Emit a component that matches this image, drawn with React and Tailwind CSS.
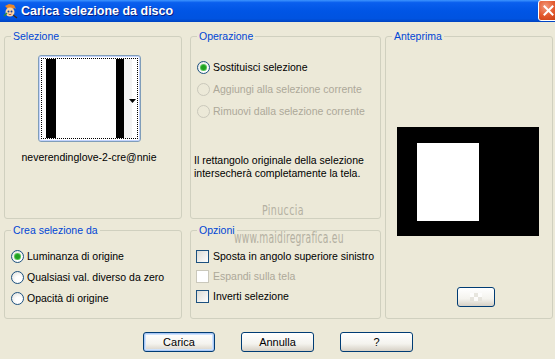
import React from "react";

const font = { fontFamily: '"Liberation Sans", Arial, sans-serif' };

function Group({ title, className = "", children }) {
  return (
    <div className={"relative border border-[#D0D0BF] rounded-[3px] " + className}>
      <span className="absolute left-[6px] -top-[7px] px-[2px] bg-[#ECE9D8] text-[#0046D5] leading-[13px]">
        {title}
      </span>
      {children}
    </div>
  );
}

function Radio({ checked, disabled, label }) {
  return (
    <div className="flex items-center h-[13px]">
      <span
        className={
          "w-[13px] h-[13px] rounded-full border flex items-center justify-center shrink-0 " +
          (disabled
            ? "border-[#CAC8BB] bg-[#ECE9D8]"
            : "border-[#1C5180] bg-[radial-gradient(circle_at_60%_65%,#ffffff_30%,#DCDCD6_100%)]")
        }
      >
        {checked && <span className="w-[5px] h-[5px] rounded-full bg-[#21A121] shadow-[0_0_0_1px_#56C456]" />}
      </span>
      <span className={"ml-[3px] whitespace-nowrap " + (disabled ? "text-[#ACA899]" : "text-black")}>{label}</span>
    </div>
  );
}

function Check({ disabled, label }) {
  return (
    <div className="flex items-center h-[13px]">
      <span
        className={
          "w-[13px] h-[13px] border shrink-0 " +
          (disabled
            ? "border-[#CAC8BB] bg-white"
            : "border-[#1C5180] bg-[linear-gradient(135deg,#DCDCD6_0%,#ffffff_100%)]")
        }
      />
      <span className={"ml-[4px] whitespace-nowrap " + (disabled ? "text-[#ACA899]" : "text-black")}>{label}</span>
    </div>
  );
}

function Button({ children, def, className = "" }) {
  return (
    <div
      className={
        "h-[20px] rounded-[3px] border border-[#003C74] bg-[linear-gradient(180deg,#FFFFFF_0%,#F4F3EE_60%,#D6D0C5_100%)] flex items-center justify-center text-black text-[11px] " +
        (def ? "shadow-[inset_0_0_0_1px_#A9C7F5,inset_0_0_0_2px_#CEE2FC] " : "") +
        className
      }
    >
      {children}
    </div>
  );
}

export default function App() {
  return (
    <div className="w-[555px] h-[359px] bg-[#ECE9D8] text-[10.5px] overflow-hidden relative" style={font}>
      {/* Title bar */}
      <div className="h-[22px] flex items-center bg-[linear-gradient(180deg,#3D95FF_0%,#0A5FEE_12%,#0055E5_50%,#0053E0_85%,#0043C0_100%)]">
        <svg width="16" height="16" viewBox="0 0 16 16" className="ml-[2px]">
          <path d="M3 3 L7 1 L12 2 L14 6 L12 5 L10 7 L6 6 Z" fill="#E8862A" />
          <circle cx="8" cy="9" r="4.5" fill="#F7D3A6" />
          <circle cx="6.5" cy="8.5" r="1" fill="#1b3c8f" />
          <circle cx="9.5" cy="8.5" r="1" fill="#1b3c8f" />
          <path d="M6.5 11 Q8 12.5 9.5 11" stroke="#b03020" strokeWidth="0.8" fill="none" />
          <path d="M11 12 L15 15" stroke="#3a2a1a" strokeWidth="1.3" />
          <path d="M2 13 L5 10" stroke="#2A8C3A" strokeWidth="1.5" />
        </svg>
        <span className="ml-[3px] text-white font-bold text-[12.5px] leading-[16px] [text-shadow:1px_1px_0_#0A1E80]">
          Carica selezione da disco
        </span>
        <div className="ml-auto mr-[-4px] w-[21px] h-[21px] mt-[-1px] rounded-[3px] border border-white bg-[radial-gradient(circle_at_35%_30%,#F29B7F_0%,#E3592D_50%,#C23A10_100%)] flex items-center justify-center">
          <svg width="11" height="11" viewBox="0 0 11 11">
            <path d="M1.5 1.5 L9.5 9.5 M9.5 1.5 L1.5 9.5" stroke="white" strokeWidth="2" strokeLinecap="square" />
          </svg>
        </div>
      </div>

      {/* Body */}
      <div className="pl-[4px] pt-[14px] flex">
        <div className="w-[178px] flex flex-col">
          <Group title="Selezione" className="h-[183px] flex flex-col items-center">
            <div className="mt-[18px] ml-[-7px] w-[103px] h-[87px] rounded-[3px] border border-[#7F9DB9] bg-white p-[2px] shadow-[inset_0_0_0_1px_#C3D3FD]">
              <div className="w-full h-full border border-dotted border-black flex items-stretch relative">
                <div className="ml-[4px] w-[10px] bg-black" />
                <div className="w-[60px] bg-white" />
                <div className="w-[8px] bg-black" />
                <div className="w-[8px] bg-[#F4F4F4]" />
                <svg width="7" height="4" viewBox="0 0 7 4" className="absolute right-[1px] top-[40px]">
                  <path d="M0 0 H7 L3.5 4 Z" fill="black" />
                </svg>
              </div>
            </div>
            <div className="mt-[9px] ml-[-8px] text-black leading-[13px] whitespace-nowrap">neverendinglove-2-cre@nnie</div>
          </Group>
          <Group title="Crea selezione da" className="mt-[11px] h-[89px] pl-[6px] pt-[19px] flex flex-col gap-[8px]">
            <Radio checked label="Luminanza di origine" />
            <Radio label="Qualsiasi val. diverso da zero" />
            <Radio label="Opacità di origine" />
          </Group>
        </div>

        <div className="ml-[8px] w-[191px] flex flex-col">
          <Group title="Operazione" className="h-[183px] pl-[6px] pt-[24px] flex flex-col">
            <div className="flex flex-col gap-[9px]">
              <Radio checked label="Sostituisci selezione" />
              <Radio disabled label="Aggiungi alla selezione corrente" />
              <Radio disabled label="Rimuovi dalla selezione corrente" />
            </div>
            <div className="mt-[36px] ml-[-3px] leading-[13px] text-black">
              Il rettangolo originale della selezione
              <br />
              intersecherà completamente la tela.
            </div>
          </Group>
          <Group title="Opzioni" className="mt-[11px] h-[89px] pl-[5px] pt-[19px] flex flex-col gap-[7px]">
            <Check label="Sposta in angolo superiore sinistro" />
            <Check disabled label="Espandi sulla tela" />
            <Check label="Inverti selezione" />
          </Group>
        </div>

        <div className="ml-[4px] w-[168px]">
          <Group title="Anteprima" className="h-[283px] flex flex-col">
            <div className="mt-[90px] ml-[11px] w-[142px] h-[109px] bg-black pl-[20px] pt-[16px]">
              <div className="w-[62px] h-[78px] bg-white" />
            </div>
            <div className="mt-[51px] ml-[71px] w-[38px] h-[20px] rounded-[3px] border border-[#003C74] bg-[linear-gradient(180deg,#FFFFFF_0%,#F4F3EE_60%,#D6D0C5_100%)] flex items-center justify-center">
              <div className="grid grid-cols-3 w-[12px] h-[8px] opacity-80">
                <div className="bg-white" /><div className="bg-[#E4E2DA]" /><div className="bg-white" />
                <div className="bg-[#E4E2DA]" /><div className="bg-white" /><div className="bg-[#E4E2DA]" />
              </div>
            </div>
          </Group>
        </div>
      </div>

      {/* Buttons */}
      <div className="mt-[13px] flex pl-[143px] gap-[26px]">
        <Button def className="w-[72px]">Carica</Button>
        <Button className="w-[73px]">Annulla</Button>
        <Button className="w-[73px]">?</Button>
      </div>

      {/* Watermark */}
      <div className="absolute left-[234px] top-[202px] flex flex-col items-start pointer-events-none text-[#8F8B7E] opacity-60" style={{ fontFamily: '"DejaVu Sans Condensed", "Liberation Sans Narrow", sans-serif' }}>
        <span className="ml-[28px] text-[14px] leading-[16px] tracking-[0.5px] scale-x-[0.75] origin-left">Pinuccia</span>
        <span className="mt-[12px] text-[16px] leading-[16px] tracking-[0.3px] scale-x-[0.64] origin-left whitespace-nowrap">www.maidiregrafica.eu</span>
      </div>
    </div>
  );
}
